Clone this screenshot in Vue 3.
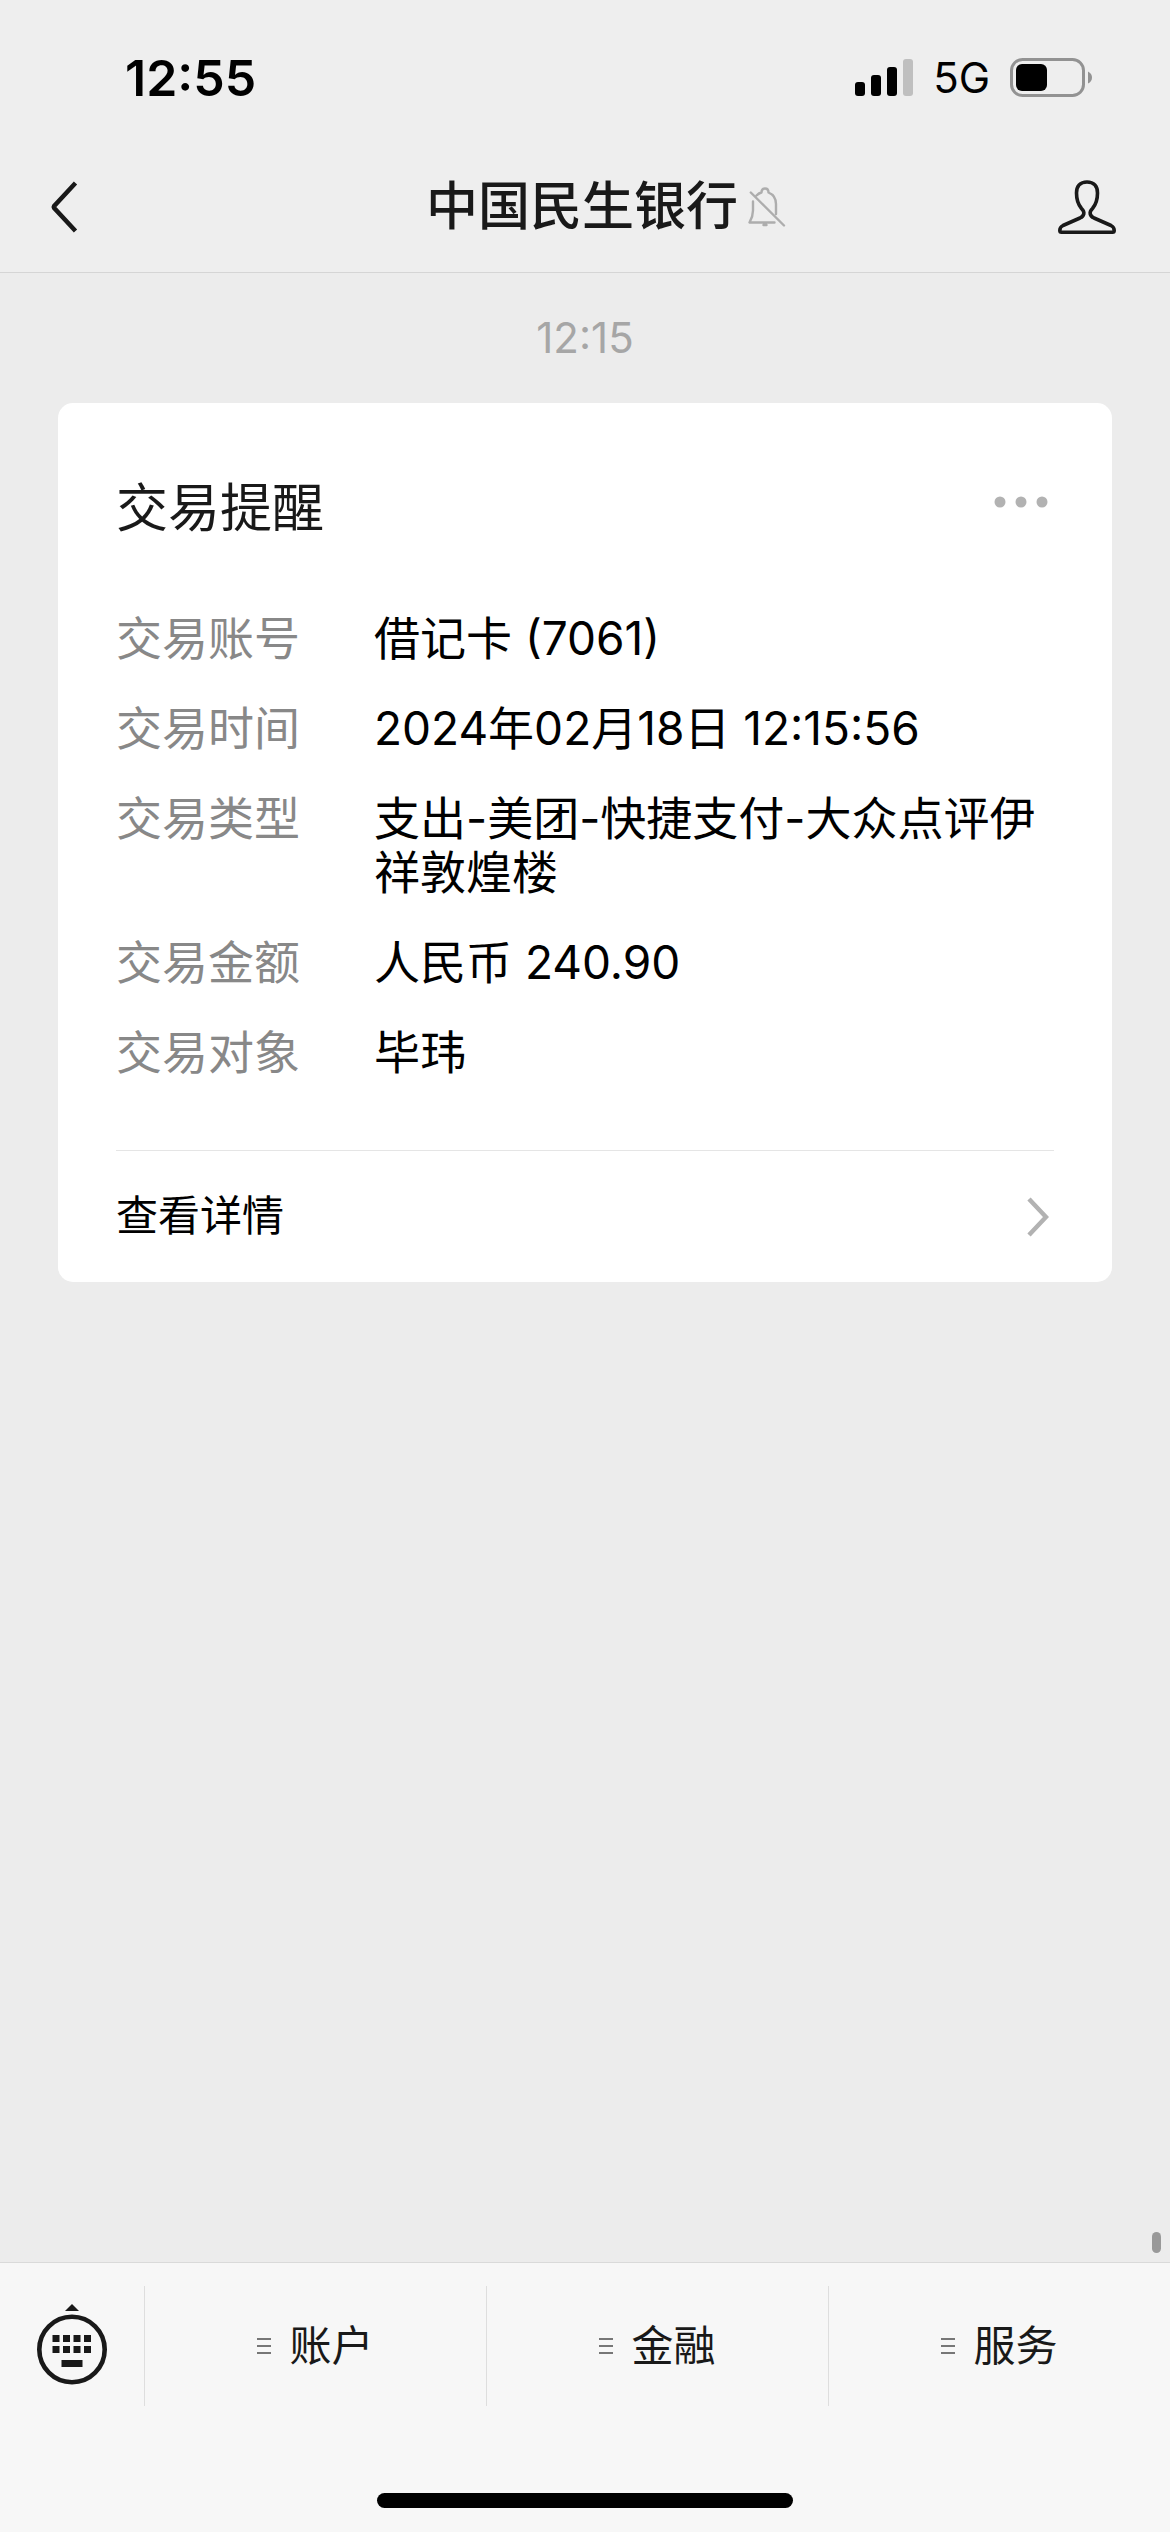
<script setup>
const details = [
  { label: '交易账号', value: '借记卡 (7061)' },
  { label: '交易时间', value: '2024年02月18日 12:15:56' },
  { label: '交易类型', value: '支出-美团-快捷支付-大众点评伊祥敦煌楼' },
  { label: '交易金额', value: '人民币 240.90' },
  { label: '交易对象', value: '毕玮' }
]

const menus = ['账户', '金融', '服务']
</script>

<template>
  <div class="page">
    <header class="top">
      <div class="status">
        <span class="clock">12:55</span>
        <div class="indicators">
          <svg class="signal" width="58" height="38" viewBox="0 0 58 38" aria-hidden="true">
            <rect x="0" y="23" width="10" height="14" rx="3" />
            <rect x="16" y="16" width="10" height="21" rx="3" />
            <rect x="32" y="8" width="10" height="29" rx="3" />
            <rect x="48" y="0" width="10" height="37" rx="3" fill="#bfbfbf" />
          </svg>
          <span class="network">5G</span>
          <svg class="battery" width="82" height="39" viewBox="0 0 82 39" aria-hidden="true">
            <rect x="1.5" y="1.5" width="72" height="36" rx="11" fill="none" stroke="#929292" stroke-width="3" />
            <rect x="6" y="6" width="31" height="27" rx="6" />
            <path d="M78 13.500q4 2 4 6t-4 6z" fill="#929292" />
          </svg>
        </div>
      </div>
      <nav class="nav">
        <button class="icon-button" type="button" aria-label="返回">
          <svg width="28" height="52" viewBox="0 0 28 52" fill="none" stroke="#191919" stroke-width="4.500">
            <path d="M25.500 2 4 25.200a1.500 1.500 0 0 0 0 1.600L25.500 50" />
          </svg>
        </button>
        <h1 class="title">
          中国民生银行
          <svg width="38" height="40" viewBox="0 0 38 40" fill="none" stroke="#adadad" stroke-width="2.400" stroke-linecap="round" stroke-linejoin="round" aria-hidden="true">
            <path d="M8.500 8.500q2.500-2.500 5-3Q13.500 1.500 17 1.500t3.500 4Q28 8.500 28 17v10M5 14.500v9q0 6-3.500 12h25M2.800 5.500 36 38.500M15.500 38h3" />
          </svg>
        </h1>
        <button class="icon-button" type="button" aria-label="账号信息">
          <svg width="58" height="54" viewBox="0 0 58 54" fill="none" stroke="#191919" stroke-width="3.600" stroke-linejoin="round">
            <path d="M29 2C22 2 18.500 6.500 18.500 13c0 8 2 12 5 15.500 4 4 2.500 7.500-1.500 9.500L5 45.500c-2.500 1.200-3.200 3-3.200 5 0 1.200.5 1.700 1.700 1.700h51c1.200 0 1.700-.5 1.700-1.700 0-2-.7-3.800-3.200-5L36 38c-4-2-5.500-5.500-1.500-9.500 3-3.500 5-7.500 5-15.500C39.500 6.500 36 2 29 2z" />
          </svg>
        </button>
      </nav>
    </header>

    <main class="chat">
      <time class="stamp">12:15</time>
      <article class="card">
        <div class="card-head">
          <h2 class="card-title">交易提醒</h2>
          <button class="options" type="button" aria-label="更多">
            <svg width="54" height="12" viewBox="0 0 54 12" fill="#b2b2b2">
              <circle cx="6" cy="6" r="5.500" />
              <circle cx="27" cy="6" r="5.500" />
              <circle cx="48" cy="6" r="5.500" />
            </svg>
          </button>
        </div>
        <dl class="details">
          <div v-for="item in details" :key="item.label" class="row">
            <dt>{{ item.label }}</dt>
            <dd>{{ item.value }}</dd>
          </div>
        </dl>
        <a class="more" href="#">
          查看详情
          <svg width="22" height="40" viewBox="0 0 22 40" fill="none" stroke="#b2b2b2" stroke-width="4.500" aria-hidden="true">
            <path d="M2 2 19 20 2 38" />
          </svg>
        </a>
      </article>
      <span class="scroll-thumb"></span>
    </main>

    <footer class="bottom">
      <div class="menu-bar">
        <button class="keyboard" type="button" aria-label="切换键盘">
          <svg width="70" height="84" viewBox="0 0 70 84" fill="#191919">
            <path d="M35 0l7 7H28z" />
            <circle cx="35" cy="45.500" r="32.700" fill="none" stroke="#191919" stroke-width="4.600" />
            <path d="M15.500 31h7v7h-7zM26 31h7v7h-7zM36.500 31h7v7h-7zM47 31h7v7h-7zM15.500 42h7v7h-7zM26 42h7v7h-7zM36.500 42h7v7h-7zM47 42h7v7h-7zM24.500 56h21v7h-21z" />
          </svg>
        </button>
        <button v-for="menu in menus" :key="menu" class="menu" type="button">
          <svg width="14" height="16" viewBox="0 0 14 16" fill="#777" aria-hidden="true">
            <path d="M0 0h14v2H0zM0 7h14v2H0zM0 14h14v2H0z" />
          </svg>
          {{ menu }}
        </button>
      </div>
      <div class="home-indicator"></div>
    </footer>
  </div>
</template>

<style>
body {
  margin: 0;
  background: #ececec;
}
</style>

<style scoped>
.page {
  display: flex;
  flex-direction: column;
  min-height: 100vh;
  background: #ececec;
  color: #191919;
  font-family: Inter, "Noto Sans CJK SC", sans-serif;
  line-height: 1.2;
}

button {
  padding: 0;
  border: 0;
  background: none;
  color: inherit;
  font: inherit;
}

svg {
  display: block;
  flex: none;
}

.top {
  background: #eee;
  border-bottom: 1px solid #d5d5d5;
}

.status {
  display: flex;
  align-items: center;
  justify-content: space-between;
  box-sizing: border-box;
  height: 142px;
  padding: 14px 78px 0 125px;
  color: #000;
}

.clock {
  font-size: 50px;
  font-weight: 600;
}

.indicators {
  display: flex;
  align-items: center;
  gap: 20px;
}

.network {
  font-size: 42px;
}

.nav {
  display: flex;
  align-items: center;
  justify-content: space-between;
  height: 130px;
  padding: 0 54px 0 50px;
}

.title {
  display: flex;
  align-items: center;
  gap: 10px;
  margin: 0;
  padding-left: 76px;
  font-size: 52px;
  font-weight: 500;
}

.chat {
  position: relative;
  display: flex;
  flex: 1;
  flex-direction: column;
}

.stamp {
  padding: 38px 0;
  color: #a6a6a6;
  font-size: 42px;
  line-height: 54px;
  text-align: center;
}

.card {
  margin: 0 58px;
  padding: 0 58px;
  border-radius: 15px;
  background: #fff;
}

.card-head {
  display: flex;
  align-items: flex-start;
  justify-content: space-between;
  padding: 70px 6px 0 0;
}

.card-title {
  margin: 0;
  font-size: 52px;
  font-weight: 400;
  line-height: 72px;
}

.options {
  padding-top: 23px;
}

.details {
  display: flex;
  flex-direction: column;
  gap: 36px;
  margin: 0;
  padding: 66px 0 71px;
  font-size: 46px;
  line-height: 54px;
}

.row {
  display: flex;
}

dt {
  flex: none;
  width: 258px;
  color: #888;
}

dd {
  flex: 1;
  margin: 0;
  color: #000;
}

.more {
  display: flex;
  align-items: center;
  justify-content: space-between;
  height: 131px;
  padding-right: 5px;
  border-top: 1px solid #e5e5e5;
  color: #000;
  font-size: 42px;
  text-decoration: none;
}

.scroll-thumb {
  position: absolute;
  right: 9px;
  bottom: 9px;
  width: 9px;
  height: 21px;
  border-radius: 5px;
  background: #999;
}

.bottom {
  border-top: 1px solid #dadada;
  background: #f7f7f7;
}

.menu-bar {
  display: flex;
  padding: 23px 0 87px;
}

.keyboard {
  display: flex;
  align-items: center;
  justify-content: center;
  width: 144px;
  height: 120px;
}

.menu {
  display: flex;
  flex: 1;
  align-items: center;
  justify-content: center;
  gap: 18px;
  border-left: 1px solid #dedede;
  font-size: 42px;
}

.home-indicator {
  width: 416px;
  height: 15px;
  margin: 0 auto 24px;
  border-radius: 8px;
  background: #000;
}
</style>
